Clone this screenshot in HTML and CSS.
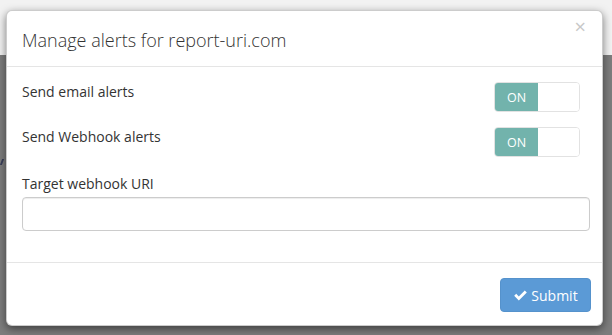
FILE: index.html
```html
<!DOCTYPE html>
<html>
<head>
<meta charset="utf-8">
<link rel="stylesheet" href="styles.css">
</head>
<body>
<div class="page">
  <div class="page-top"></div>
  <div class="page-bottom"><span class="stray"></span></div>
</div>
<div class="modal">
  <div class="modal-header">
    <h4 class="modal-title">Manage alerts for report-uri.com</h4>
    <span class="close">&times;</span>
  </div>
  <div class="modal-body">
    <div class="row">
      <label class="label">Send email alerts</label>
      <div class="switch"><span class="on">ON</span><span class="off"></span></div>
    </div>
    <div class="row">
      <label class="label">Send Webhook alerts</label>
      <div class="switch"><span class="on">ON</span><span class="off"></span></div>
    </div>
    <div class="field">
      <label class="label">Target webhook URI</label>
      <input class="input" type="text">
    </div>
  </div>
  <div class="modal-footer">
    <button class="btn">
      <svg class="check" viewBox="0 0 16 14" width="15" height="13"><path d="M1.2 7.4 L3.4 5.2 L6.2 8 L12.6 1.6 L14.8 3.8 L6.2 12.4 Z" fill="#fff"/></svg>
      Submit
    </button>
  </div>
</div>
</body>
</html>
```

FILE: styles.css
```css
* { box-sizing: border-box; }
html, body { margin: 0; padding: 0; }
body {
  width: 612px;
  height: 335px;
  overflow: hidden;
  position: relative;
  font-family: "Open Sans", "Liberation Sans", sans-serif;
  color: #333;
}
.page { position: absolute; inset: 0; display: flex; flex-direction: column; }
.page-top { height: 55px; background: #f2f2f2; }
.page-bottom { flex: 1; background: #7d7d7d; position: relative; }
.stray {
  position: absolute;
  left: 0;
  top: 104px;
  width: 3px;
  height: 6px;
  border-right: 2px solid #3a3f5a;
  transform: skewX(-20deg);
}
.modal {
  position: absolute;
  left: 6px;
  top: 10px;
  width: 597px;
  height: 316px;
  background: #fff;
  border-radius: 6px;
  border: 1px solid rgba(0,0,0,0.2);
  box-shadow: 0 3px 9px rgba(0,0,0,0.5);
  display: flex;
  flex-direction: column;
}
.modal-header {
  height: 56px;
  border-bottom: 1px solid #e5e5e5;
  padding: 0 15px;
  display: flex;
  align-items: center;
  justify-content: space-between;
}
.modal-title {
  margin: 0;
  font-size: 18px;
  font-weight: 300;
  color: #333;
  position: relative;
  top: 1px;
}
.close {
  font-size: 20px;
  color: #c8c8c8;
  align-self: flex-start;
  margin-top: 6px;
  margin-right: 1px;
  line-height: 1;
}
.modal-body {
  padding: 15px 15px 0;
  height: 196px;
  border-bottom: 1px solid #e5e5e5;
}
.row {
  display: flex;
  justify-content: space-between;
  align-items: flex-start;
  height: 45px;
}
.label {
  font-size: 14px;
  color: #333;
  line-height: 20px;
  display: block;
}
.switch {
  width: 86px;
  height: 30px;
  border: 1px solid #e2e2e2;
  border-radius: 4px;
  display: flex;
  overflow: hidden;
  margin-right: 7px;
}
.switch .on {
  width: 43px;
  background: #72b3ac;
  color: #fff;
  font-size: 12.5px;
  display: flex;
  align-items: center;
  justify-content: center;
}
.switch .off { flex: 1; background: #fff; }
.field { padding-top: 2px; }
.field .label { margin-bottom: 3px; }
.input {
  display: block;
  width: 568px;
  height: 34px;
  border: 1px solid #ccc;
  border-radius: 4px;
  box-shadow: inset 0 1px 1px rgba(0,0,0,0.075);
}
.modal-footer {
  flex: 1;
  padding: 15px 11px 0 15px;
  display: flex;
  justify-content: flex-end;
  align-items: flex-start;
}
.btn {
  width: 91px;
  height: 34px;
  background: #5b9ad6;
  border: 1px solid #5592cc;
  border-radius: 4px;
  color: #fff;
  font-family: "Open Sans", "Liberation Sans", sans-serif;
  font-size: 14px;
  display: flex;
  align-items: center;
  justify-content: center;
  gap: 3px;
  padding: 0;
}
.check { display: block; }
```
